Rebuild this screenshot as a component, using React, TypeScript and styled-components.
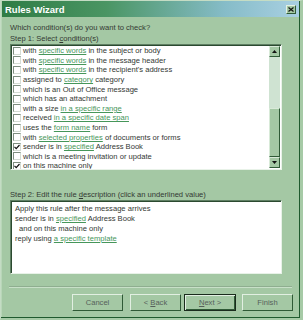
import React from 'react';
import styled, { createGlobalStyle } from 'styled-components';

const Global = createGlobalStyle`
  html, body {
    margin: 0;
    padding: 0;
    background: #a6caa6;
  }
  body {
    font-family: "Liberation Sans", Arial, sans-serif;
  }
`;

const Window = styled.div`
  width: 303px;
  height: 320px;
  box-sizing: border-box;
  background: #a4c8a4;
  border-left: 1px solid #c4dcc4;
  border-top: 1px solid #c4dcc4;
  border-right: 3px solid #a6caa6;
  border-bottom: 2px solid #a6caa6;
  box-shadow: inset -1px -1px 0 #1f5a2e, inset 1px 1px 0 #b8d6b8;
  display: flex;
  flex-direction: column;
  color: #333833;
  font-size: 7.6px;
  overflow: hidden;
`;

const TitleBar = styled.div`
  height: 16px;
  margin: 0 1px 0 1px;
  display: flex;
  align-items: center;
  justify-content: space-between;
  padding: 0 3px 0 3px;
  background: linear-gradient(to right, #2f7c45 0%, #4a9563 35%, #86bcc8 75%, #a9d0e2 100%);
  color: #ffffff;
  font-weight: bold;
  font-size: 9.5px;
`;

const CloseButton = styled.div`
  width: 10px;
  height: 9px;
  box-sizing: border-box;
  background: #a4c8a4;
  border: 1px solid;
  border-color: #e4f0e4 #2f5a36 #2f5a36 #e4f0e4;
  display: flex;
  align-items: center;
  justify-content: center;
`;

const Content = styled.div`
  padding: 0 18px 0 9px;
  display: flex;
  flex-direction: column;
`;

const Prompt = styled.div<{ $top: number }>`
  margin-top: ${(p) => p.$top}px;
  height: 11px;
  line-height: 11px;
  white-space: nowrap;
`;

const ListFrame = styled.div`
  height: 126px;
  box-sizing: border-box;
  border: 1px solid;
  border-color: #5f7f63 #e8f2e8 #e8f2e8 #5f7f63;
  box-shadow: inset 1px 1px 0 #2b4a30;
  background: #ffffff;
  display: flex;
`;

const Rows = styled.div`
  flex: 1;
  padding: 1px 0 0 2px;
  overflow: hidden;
`;

const Row = styled.div`
  height: 9.6px;
  display: flex;
  align-items: center;
  white-space: nowrap;
`;

const RowText = styled.span`
  white-space: pre;
`;

const Check = styled.span`
  width: 8px;
  height: 8px;
  box-sizing: border-box;
  border: 1px solid;
  border-color: #7e8e80 #d4dcd4 #d4dcd4 #7e8e80;
  background: #ffffff;
  margin-right: 2px;
  flex: none;
  display: flex;
  align-items: center;
  justify-content: center;
`;

const Link = styled.span`
  color: #46965a;
  text-decoration: underline;
  text-underline-offset: 1px;
`;

const Scrollbar = styled.div`
  width: 11px;
  margin: 1px 1px 1px 0;
  display: flex;
  flex-direction: column;
  background: #cfe3d2;
`;

const ArrowBtn = styled.div`
  height: 11px;
  box-sizing: border-box;
  background: #a4c8a4;
  border: 1px solid;
  border-color: #d8ead8 #2f5a36 #2f5a36 #d8ead8;
  display: flex;
  align-items: center;
  justify-content: center;
  flex: none;
`;

const Track = styled.div`
  flex: 1;
`;

const Thumb = styled.div`
  height: 49px;
  box-sizing: border-box;
  background: #a4c8a4;
  border: 1px solid;
  border-color: #d8ead8 #2f5a36 #2f5a36 #d8ead8;
`;

const DescBox = styled.div`
  height: 74px;
  box-sizing: border-box;
  border: 1px solid;
  border-color: #5f7f63 #e8f2e8 #e8f2e8 #5f7f63;
  box-shadow: inset 1px 1px 0 #2b4a30;
  background: #ffffff;
  padding: 3px 4px;
`;

const DescLine = styled.div<{ $indent?: boolean }>`
  height: 10px;
  line-height: 10px;
  white-space: nowrap;
  padding-left: ${(p) => (p.$indent ? 4 : 0)}px;
`;

const Separator = styled.div`
  margin: 12px 8px 0 8px;
  height: 0;
  border-top: 1px solid #8fae90;
  border-bottom: 1px solid #c8e0c8;
`;

const ButtonRow = styled.div`
  display: flex;
  justify-content: flex-end;
  padding: 6px 7px 0 0;
  gap: 6px;
`;

const Button = styled.div<{ $default?: boolean; $gap?: number }>`
  width: ${(p) => (p.$default ? 52 : 51)}px;
  height: 17px;
  box-sizing: border-box;
  margin-left: ${(p) => p.$gap ?? 0}px;
  background: #a4c8a4;
  border: 1px solid;
  border-color: ${(p) => (p.$default ? '#1a2c1d' : '#e2efe2 #2f5a36 #2f5a36 #e2efe2')};
  box-shadow: ${(p) => (p.$default ? 'inset 1px 1px 0 #e2efe2, inset -1px -1px 0 #2f5a36' : 'none')};
  display: flex;
  align-items: center;
  justify-content: center;
  color: #56605a;
  font-size: 7.6px;
  white-space: pre;
`;

const U = styled.span`
  text-decoration: underline;
`;

const tick = (
  <svg width="6" height="6" viewBox="0 0 6 6">
    <path d="M0.5 2.8 L2.2 4.6 L5.5 1" stroke="#111" strokeWidth="1.2" fill="none" />
  </svg>
);

const up = (
  <svg width="5" height="3" viewBox="0 0 5 3">
    <path d="M2.5 0 L5 3 L0 3 Z" fill="#111" />
  </svg>
);

const down = (
  <svg width="5" height="3" viewBox="0 0 5 3">
    <path d="M0 0 L5 0 L2.5 3 Z" fill="#111" />
  </svg>
);

type Cond = { parts: (string | { link: string })[]; on?: boolean };

const conditions: Cond[] = [
  { parts: ['with ', { link: 'specific words' }, ' in the subject or body'] },
  { parts: ['with ', { link: 'specific words' }, ' in the message header'] },
  { parts: ['with ', { link: 'specific words' }, " in the recipient's address"] },
  { parts: ['assigned to ', { link: 'category' }, ' category'] },
  { parts: ['which is an Out of Office message'] },
  { parts: ['which has an attachment'] },
  { parts: ['with a size ', { link: 'in a specific range' }] },
  { parts: ['received ', { link: 'in a specific date span' }] },
  { parts: ['uses the ', { link: 'form name' }, ' form'] },
  { parts: ['with ', { link: 'selected properties' }, ' of documents or forms'] },
  { parts: ['sender is in ', { link: 'specified' }, ' Address Book'], on: true },
  { parts: ['which is a meeting invitation or update'] },
  { parts: ['on this machine only'], on: true },
];

const renderParts = (parts: Cond['parts']) =>
  parts.map((p, i) => (typeof p === 'string' ? p : <Link key={i}>{p.link}</Link>));

export default function App() {
  return (
    <>
      <Global />
      <Window>
        <TitleBar>
          <span>Rules Wizard</span>
          <CloseButton>
            <svg width="6" height="5" viewBox="0 0 6 5">
              <path d="M0.5 0.5 L5.5 4.5 M5.5 0.5 L0.5 4.5" stroke="#111" strokeWidth="1.2" />
            </svg>
          </CloseButton>
        </TitleBar>
        <Content>
          <Prompt $top={5}>Which condition(s) do you want to check?</Prompt>
          <Prompt $top={0}>
            Step 1: Select <U>c</U>ondition(s)
          </Prompt>
          <ListFrame>
            <Rows>
              {conditions.map((c, i) => (
                <Row key={i}>
                  <Check>{c.on ? tick : null}</Check>
                  <RowText>{renderParts(c.parts)}</RowText>
                </Row>
              ))}
            </Rows>
            <Scrollbar>
              <ArrowBtn>{up}</ArrowBtn>
              <Track />
              <Thumb />
              <ArrowBtn>{down}</ArrowBtn>
            </Scrollbar>
          </ListFrame>
          <Prompt $top={19}>
            Step 2: Edit the rule <U>d</U>escription (click an underlined value)
          </Prompt>
          <DescBox>
            <DescLine>Apply this rule after the message arrives</DescLine>
            <DescLine>
              sender is in <Link>specified</Link> Address Book
            </DescLine>
            <DescLine $indent>and on this machine only</DescLine>
            <DescLine>
              reply using <Link>a specific template</Link>
            </DescLine>
          </DescBox>
        </Content>
        <Separator />
        <ButtonRow>
          <Button>Cancel</Button>
          <Button $gap={1}>
            {'< '}
            <U>B</U>ack
          </Button>
          <Button $default $gap={-3}>
            <U>N</U>ext {'>'}
          </Button>
          <Button>Finish</Button>
        </ButtonRow>
      </Window>
    </>
  );
}
